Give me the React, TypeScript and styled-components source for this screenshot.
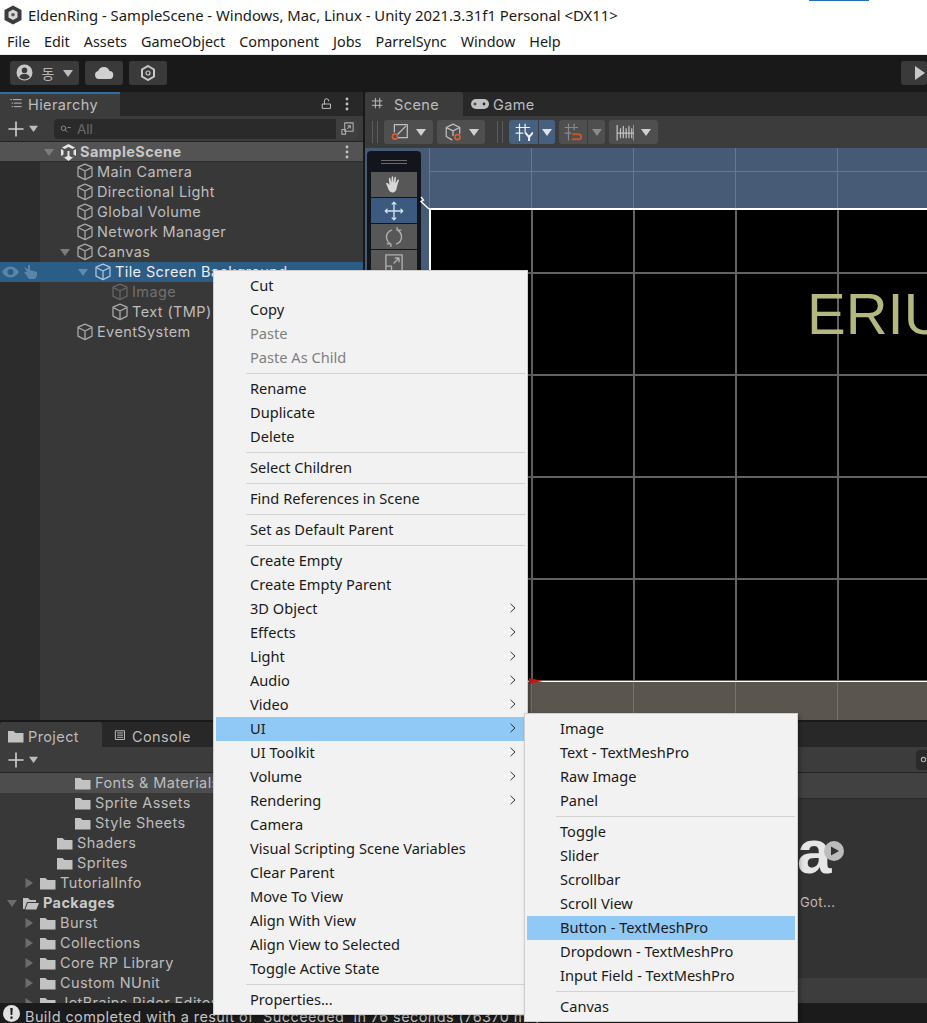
import { ReactNode } from 'react';
import styled, { createGlobalStyle } from 'styled-components';

const GlobalStyle = createGlobalStyle`
  html, body {
    margin: 0;
    padding: 0;
    background: #191919;
    overflow: hidden;
  }
  * {
    box-sizing: border-box;
  }
`;

const WIN_FONT = `"Noto Sans", "Noto Sans CJK KR", sans-serif`;
const UNITY_FONT = `Inter, "Noto Sans CJK KR", sans-serif`;

const Page = styled.div`
  position: relative;
  width: 927px;
  height: 1023px;
  overflow: hidden;
  display: flex;
  flex-direction: column;
  font-family: ${UNITY_FONT};
  background: #191919;
`;

const TitleBar = styled.div`
  position: relative;
  height: 30px;
  background: #fff;
  display: flex;
  align-items: center;
  gap: 6px;
  padding: 0 0 1px 4px;
  font-family: ${WIN_FONT};
  font-size: 14.85px;
  color: #1a1a1a;
  white-space: nowrap;
`;

const TitleAccent = styled.div`
  position: absolute;
  top: 0;
  left: 809px;
  width: 60px;
  height: 1px;
  background: #1f6fb5;
`;

const MenuBar = styled.div`
  height: 24px;
  background: #fff;
  display: flex;
  align-items: center;
  gap: 14px;
  padding: 0 0 2px 7px;
  font-family: ${WIN_FONT};
  font-size: 14.4px;
  color: #1a1a1a;
`;

const TopToolbar = styled.div`
  height: 38px;
  background: #191919;
  border-top: 1px solid #e8e8e8;
  display: flex;
  align-items: center;
  gap: 6px;
  padding: 0 0 2px 10px;
`;

const TopButton = styled.div<{ $w: number }>`
  width: ${({ $w }) => $w}px;
  height: 24px;
  background: #3a3a3a;
  border-radius: 3px;
  display: flex;
  align-items: center;
  justify-content: center;
  gap: 9px;
  color: #b4b4b4;
  font-size: 14px;
`;

const PlayButton = styled(TopButton)`
  margin-left: auto;
  justify-content: flex-start;
  padding-left: 14px;
`;

const Main = styled.div`
  height: 628px;
  display: flex;
  gap: 2px;
`;

const HierarchyPanel = styled.div`
  width: 363px;
  display: flex;
  flex-direction: column;
  background: #383838;
`;

const TabRow = styled.div`
  height: 24px;
  flex: none;
  background: #282828;
  display: flex;
  align-items: stretch;
`;

const Tab = styled.div<{ $w: number; $pad: number; $gap: number; $active?: boolean; $accent?: boolean }>`
  width: ${({ $w }) => $w}px;
  display: flex;
  align-items: center;
  gap: ${({ $gap }) => $gap}px;
  padding: 0 0 ${({ $accent }) => ($accent ? 2 : 0)}px ${({ $pad }) => $pad}px;
  font-size: 14.5px;
  letter-spacing: 0.4px;
  color: #bdbdbd;
  background: ${({ $active }) => ($active ? '#3c3c3c' : 'transparent')};
  border-top: ${({ $accent }) => ($accent ? '2px solid #2f6ea5' : 'none')};
  border-radius: ${({ $accent }) => ($accent ? '0' : '3px 3px 0 0')};
`;

const BottomTab = styled(Tab)`
  padding-top: 3px;
`;

const TabActions = styled.div`
  margin-left: auto;
  display: flex;
  align-items: center;
  gap: 11px;
  padding-right: 14px;
`;

const PanelToolbar = styled.div`
  height: 26px;
  flex: none;
  background: #3c3c3c;
  border-bottom: 1px solid #232323;
  display: flex;
  align-items: center;
  padding-left: 8px;
`;

const CaretGap = styled.span`
  margin-left: 5px;
  display: flex;
`;

const SearchField = styled.div`
  margin-left: 16px;
  width: 304px;
  height: 20px;
  background: #2a2a2a;
  border-radius: 4px;
  display: flex;
  align-items: center;
  gap: 6px;
  padding-left: 5px;
  font-size: 13.5px;
  color: #6a6a6a;
`;

const SearchAction = styled.div`
  margin-left: auto;
  width: 22px;
  height: 20px;
  background: #3f3f3f;
  border-radius: 0 4px 4px 0;
  display: flex;
  align-items: center;
  justify-content: center;
`;

const HierarchyTree = styled.div`
  flex: 1;
  background: linear-gradient(to right, #2c2c2c 40px, #383838 40px);
`;

const SceneHeaderRow = styled.div`
  height: 20px;
  background: #535353;
  border-bottom: 1px solid #2c2c2c;
  display: flex;
  align-items: center;
  padding: 1px 0 0 44px;
`;

const TreeRow = styled.div<{ $indent: number; $selected?: boolean; $highlight?: boolean }>`
  position: relative;
  height: 20px;
  display: flex;
  align-items: center;
  padding-left: ${({ $indent }) => $indent}px;
  background: ${({ $selected, $highlight }) => ($selected ? '#2c5d87' : $highlight ? '#4d4d4d' : 'transparent')};
  white-space: nowrap;
`;

const ArrowSlot = styled.span`
  width: 16px;
  flex: none;
  display: flex;
  align-items: center;
`;

const RowLabel = styled.span<{ $muted?: boolean; $selected?: boolean; $bold?: boolean }>`
  margin-left: 3px;
  padding-bottom: 2px;
  font-size: 14.5px;
  letter-spacing: 0.4px;
  font-weight: ${({ $bold }) => ($bold ? 700 : 400)};
  color: ${({ $muted, $selected, $bold }) =>
    $muted ? '#707070' : $selected ? '#ececec' : $bold ? '#c8c8c8' : '#bdbdbd'};
`;

const RowBadges = styled.div`
  position: absolute;
  left: 2px;
  top: 2px;
  display: flex;
  gap: 4px;
`;

const ScenePanel = styled.div`
  flex: 1;
  display: flex;
  flex-direction: column;
  min-width: 0;
`;

const SceneToolbar = styled.div`
  height: 32px;
  flex: none;
  background: #3c3c3c;
  display: flex;
  align-items: center;
  gap: 4px;
  padding-left: 7px;
`;

const Grip = styled.div<{ $before: number; $after: number }>`
  width: 6px;
  height: 22px;
  margin: 0 ${({ $after }) => $after}px 0 ${({ $before }) => $before}px;
  border-left: 1px solid #5c5c5c;
  border-right: 1px solid #5c5c5c;
`;

const ToolGroup = styled.div<{ $w: number; $blue?: boolean; $join?: boolean }>`
  width: ${({ $w }) => $w}px;
  height: 24px;
  background: ${({ $blue }) => ($blue ? '#46607f' : '#4f4f4f')};
  border-radius: ${({ $join }) => ($join ? '0 3px 3px 0' : '3px')};
  display: flex;
  align-items: center;
  justify-content: space-around;
  padding: 0 3px;
`;

const JoinedGroup = styled.div`
  display: flex;
  gap: 1px;
`;

const LeftTool = styled(ToolGroup)`
  border-radius: 3px 0 0 3px;
`;

const SceneView = styled.div`
  position: relative;
  flex: 1;
  display: flex;
  flex-direction: column;
  overflow: hidden;
  background: linear-gradient(#465a75, #4f6380);
`;

const Sky = styled.div`
  height: 60px;
  flex: none;
  margin-left: 64px;
  background-image: linear-gradient(to right, #66778f 1px, transparent 1px),
    linear-gradient(to bottom, #66778f 1px, transparent 1px);
  background-size: 102px 102px;
  background-position: 0 23px;
`;

const GameCanvas = styled.div`
  position: relative;
  flex: 1;
  margin-left: 64px;
  border-top: 2px solid #fff;
  border-left: 2px solid #fff;
  background-color: #000;
  background-image: linear-gradient(to right, #626262 2px, transparent 2px),
    linear-gradient(to bottom, #626262 2px, transparent 2px);
  background-size: 102px 102px;
  background-position: 100px 62px;
`;

const CanvasTitle = styled.div`
  position: absolute;
  left: 376px;
  top: 71px;
  font-family: 'Liberation Sans', sans-serif;
  font-size: 58px;
  line-height: 66px;
  color: #b5b87e;
  white-space: nowrap;
`;

const Ground = styled.div`
  height: 39px;
  flex: none;
  border-top: 1px solid #fff;
  background-color: #5a564f;
  background-image: linear-gradient(to right, #77736c 1px, transparent 1px);
  background-size: 102px 100%;
  background-position: 268px 0;
`;

const ToolPanel = styled.div`
  position: absolute;
  left: 2px;
  top: 3px;
  width: 54px;
  padding: 8px 4px 0;
  height: 160px;
  background: #12151c;
  border-radius: 4px;
  display: flex;
  flex-direction: column;
  gap: 1px;
`;

const ToolGrip = styled.div`
  height: 4px;
  margin: 1px 10px 7px;
  border-top: 1px solid #6a6a6a;
  border-bottom: 1px solid #6a6a6a;
`;

const ToolButton = styled.div<{ $active?: boolean }>`
  height: 25px;
  flex: none;
  background: ${({ $active }) => ($active ? '#3c5a80' : '#575757')};
  display: flex;
  align-items: center;
  justify-content: center;
  &:first-of-type {
    border-radius: 3px 3px 0 0;
  }
`;

const CornerGizmo = styled.svg`
  position: absolute;
  left: 55px;
  top: 48px;
`;

const RedHandle = styled.svg`
  position: absolute;
  left: 164px;
  bottom: 36px;
`;

const BottomPanel = styled.div`
  flex: 1;
  margin-top: 2px;
  display: flex;
  flex-direction: column;
  min-height: 0;
`;

const BottomTabs = styled(TabRow)`
  height: 25px;
`;

const BottomToolbar = styled(PanelToolbar)`
  height: 26px;
  padding-right: 0;
`;

const MiniSearch = styled.div`
  margin-left: auto;
  width: 11px;
  height: 20px;
  background: #2a2a2a;
  border-radius: 4px 0 0 4px;
  display: flex;
  align-items: center;
  padding-left: 4px;
`;

const BottomBody = styled.div`
  flex: 1;
  min-height: 0;
  display: flex;
`;

const ProjectTree = styled.div`
  width: 400px;
  background: #383838;
  overflow: hidden;
`;

const FolderGap = styled.span`
  width: 1px;
  flex: none;
`;

const AssetPane = styled.div`
  flex: 1;
  display: flex;
  flex-direction: column;
  background: #333;
  position: relative;
`;

const AssetHeader = styled.div`
  height: 26px;
  flex: none;
  background: #414141;
  border-bottom: 1px solid #2a2a2a;
`;

const AssetGrid = styled.div`
  flex: 1;
  position: relative;
`;

const AssetFooter = styled.div`
  height: 25px;
  flex: none;
  background: #3d3d3d;
`;

const AssetGlyph = styled.div`
  position: absolute;
  left: 397px;
  top: 18px;
  font-family: 'Liberation Sans', sans-serif;
  font-weight: 700;
  font-size: 62px;
  line-height: 70px;
  color: #e6e6e6;
`;

const AssetPlay = styled.svg`
  position: absolute;
  left: 424px;
  top: 42px;
`;

const AssetLabel = styled.div`
  position: absolute;
  left: 400px;
  top: 95px;
  font-size: 13px;
  letter-spacing: 0.4px;
  color: #bdbdbd;
`;

const StatusBar = styled.div`
  height: 20px;
  flex: none;
  background: #1b1b1b;
  display: flex;
  align-items: center;
  gap: 5px;
  padding: 6px 0 0 3px;
  font-size: 14.5px;
  letter-spacing: 0.4px;
  color: #c4c4c4;
  white-space: nowrap;
  overflow: hidden;
`;

const StatusIcon = styled.svg`
  flex: none;
  margin-top: -6px;
`;

const Menu = styled.div<{ $left: number; $top: number; $w: number }>`
  position: absolute;
  left: ${({ $left }) => $left}px;
  top: ${({ $top }) => $top}px;
  width: ${({ $w }) => $w}px;
  padding: 3px 2px 2px;
  background: #f2f2f2;
  border: 1px solid #cfcfcf;
  box-shadow: 2px 2px 4px rgba(0, 0, 0, 0.3);
  font-family: ${WIN_FONT};
  font-size: 14.6px;
  color: #1a1a1a;
`;

const MenuItem = styled.div<{ $active?: boolean; $disabled?: boolean; $pad: number }>`
  height: 24px;
  display: flex;
  align-items: center;
  justify-content: space-between;
  padding: 0 8px 3px ${({ $pad }) => $pad}px;
  white-space: nowrap;
  background: ${({ $active }) => ($active ? '#90c8f6' : 'transparent')};
  color: ${({ $disabled }) => ($disabled ? '#7f7f7f' : '#1a1a1a')};
`;

const MenuSeparator = styled.div<{ $inset: number }>`
  height: 1px;
  margin: 3px 0 3px ${({ $inset }) => $inset}px;
  background: #d2d2d2;
`;

const Stroke = ({ size = 16, color = '#bdbdbd', children }: { size?: number; color?: string; children: ReactNode }) => (
  <svg width={size} height={size} viewBox="0 0 16 16" fill="none" stroke={color} strokeWidth="1.1" strokeLinejoin="round" strokeLinecap="round">
    {children}
  </svg>
);

const Caret = ({ color = '#bdbdbd', dir = 'down', size = 10 }: { color?: string; dir?: 'down' | 'right'; size?: number }) => (
  <svg width={size} height={size} viewBox="0 0 10 10">
    <path d={dir === 'down' ? 'M0 2h10L5 9z' : 'M1.5 0v10L9 5z'} fill={color} />
  </svg>
);

const Cube = ({ color = '#a8a8a8' }: { color?: string }) => (
  <svg width="18" height="18" viewBox="0 0 18 18" fill="none" stroke={color} strokeWidth="1.3" strokeLinejoin="round">
    <path d="M9 1.2 16 4.2v9L9 16.6 2 13.2v-9z" />
    <path d="M2.4 4.6 9 8l6.6-3.4M9 8v8.4" />
  </svg>
);

const Folder = ({ open }: { open?: boolean }) => (
  <svg width="16" height="13" viewBox="0 0 16 13" fill="#c2c2c2">
    {open ? <path d="M0 1h5l2 2h6v2H4L1.6 12H0zM4.8 6H16l-2.6 6.6H2.4z" /> : <path d="M0 1h5.5l2 2H15.500v9.500H0z" />}
  </svg>
);

const SmallPlus = () => (
  <Stroke size={16} color="#d0d0d0">
    <path d="M8 1v14M1 8h14" strokeWidth="1.6" />
  </Stroke>
);

const Chevron = () => (
  <svg width="8" height="10" viewBox="0 0 8 10" fill="none" stroke="#333" strokeWidth="1">
    <path d="M1.500 .8 6 5 1.500 9.200" />
  </svg>
);

const Kebab = () => (
  <svg width="4" height="14" viewBox="0 0 4 14" fill="#c4c4c4">
    <circle cx="2" cy="2" r="1.4" />
    <circle cx="2" cy="7" r="1.4" />
    <circle cx="2" cy="12" r="1.4" />
  </svg>
);

type HierarchyItem = { label: string; indent: number; arrow?: boolean; muted?: boolean; selected?: boolean };

const hierarchyItems: HierarchyItem[] = [
  { label: 'Main Camera', indent: 60 },
  { label: 'Directional Light', indent: 60 },
  { label: 'Global Volume', indent: 60 },
  { label: 'Network Manager', indent: 60 },
  { label: 'Canvas', indent: 60, arrow: true },
  { label: 'Tile Screen Background', indent: 78, arrow: true, selected: true },
  { label: 'Image', indent: 95, muted: true },
  { label: 'Text (TMP)', indent: 95 },
  { label: 'EventSystem', indent: 60 },
];

type ProjectItem = { label: string; indent: number; arrow?: 'right' | 'down'; bold?: boolean; highlight?: boolean };

const projectItems: ProjectItem[] = [
  { label: 'Fonts & Materials', indent: 59, highlight: true },
  { label: 'Sprite Assets', indent: 59 },
  { label: 'Style Sheets', indent: 59 },
  { label: 'Shaders', indent: 41 },
  { label: 'Sprites', indent: 41 },
  { label: 'TutorialInfo', indent: 24, arrow: 'right' },
  { label: 'Packages', indent: 7, arrow: 'down', bold: true },
  { label: 'Burst', indent: 24, arrow: 'right' },
  { label: 'Collections', indent: 24, arrow: 'right' },
  { label: 'Core RP Library', indent: 24, arrow: 'right' },
  { label: 'Custom NUnit', indent: 24, arrow: 'right' },
  { label: 'JetBrains Rider Editor', indent: 24, arrow: 'right' },
];

type MenuEntry = { label?: string; disabled?: boolean; sub?: boolean; active?: boolean; sep?: boolean };

const contextMenu: MenuEntry[] = [
  { label: 'Cut' },
  { label: 'Copy' },
  { label: 'Paste', disabled: true },
  { label: 'Paste As Child', disabled: true },
  { sep: true },
  { label: 'Rename' },
  { label: 'Duplicate' },
  { label: 'Delete' },
  { sep: true },
  { label: 'Select Children' },
  { sep: true },
  { label: 'Find References in Scene' },
  { sep: true },
  { label: 'Set as Default Parent' },
  { sep: true },
  { label: 'Create Empty' },
  { label: 'Create Empty Parent' },
  { label: '3D Object', sub: true },
  { label: 'Effects', sub: true },
  { label: 'Light', sub: true },
  { label: 'Audio', sub: true },
  { label: 'Video', sub: true },
  { label: 'UI', sub: true, active: true },
  { label: 'UI Toolkit', sub: true },
  { label: 'Volume', sub: true },
  { label: 'Rendering', sub: true },
  { label: 'Camera' },
  { label: 'Visual Scripting Scene Variables' },
  { label: 'Clear Parent' },
  { label: 'Move To View' },
  { label: 'Align With View' },
  { label: 'Align View to Selected' },
  { label: 'Toggle Active State' },
  { sep: true },
  { label: 'Properties...' },
];

const uiMenu: MenuEntry[] = [
  { label: 'Image' },
  { label: 'Text - TextMeshPro' },
  { label: 'Raw Image' },
  { label: 'Panel' },
  { sep: true },
  { label: 'Toggle' },
  { label: 'Slider' },
  { label: 'Scrollbar' },
  { label: 'Scroll View' },
  { label: 'Button - TextMeshPro', active: true },
  { label: 'Dropdown - TextMeshPro' },
  { label: 'Input Field - TextMeshPro' },
  { sep: true },
  { label: 'Canvas' },
];

const menus = ['File', 'Edit', 'Assets', 'GameObject', 'Component', 'Jobs', 'ParrelSync', 'Window', 'Help'];

const renderMenu = (entries: MenuEntry[], pad: number, inset: number) =>
  entries.map((entry, i) =>
    entry.sep ? (
      <MenuSeparator key={i} $inset={inset} />
    ) : (
      <MenuItem key={i} $pad={pad} $active={entry.active} $disabled={entry.disabled}>
        {entry.label}
        {entry.sub && <Chevron />}
      </MenuItem>
    ),
  );

const App = () => {
  return (
    <Page>
      <GlobalStyle />
      <TitleBar>
        <svg width="18" height="20" viewBox="0 0 18 20">
          <path d="M9 0.500 17.500 5v10L9 19.500 0.500 15V5z" fill="#3c3c3c" />
          <path d="M9 4.500 13.500 7v5.500L9 15l-4.500-2.500V7z" fill="#d8d8d8" />
          <circle cx="9" cy="9.800" r="1.800" fill="#555" />
        </svg>
        EldenRing - SampleScene - Windows, Mac, Linux - Unity 2021.3.31f1 Personal &lt;DX11&gt;
        <TitleAccent />
      </TitleBar>
      <MenuBar>
        {menus.map((menu) => (
          <span key={menu}>{menu}</span>
        ))}
      </MenuBar>
      <TopToolbar>
        <TopButton $w={69}>
          <svg width="17" height="17" viewBox="0 0 16 16">
            <circle cx="8" cy="8" r="7.500" fill="#c8c8c8" />
            <circle cx="8" cy="6" r="2.600" fill="#3a3a3a" />
            <path d="M3 12.500c1-2.500 3-3 5-3s4 .5 5 3c-1.200 1.200-3 2-5 2s-3.800-.8-5-2z" fill="#3a3a3a" />
          </svg>
          동
          <Caret />
        </TopButton>
        <TopButton $w={38}>
          <svg width="20" height="13" viewBox="0 0 20 13">
            <path d="M5 13a4 4 0 0 1-.8-7.900A6 6 0 0 1 15.500 5a4 4 0 0 1-.5 8z" fill="#d0d0d0" />
          </svg>
        </TopButton>
        <TopButton $w={38}>
          <svg width="16" height="16" viewBox="0 0 16 16" fill="none" stroke="#c8c8c8">
            <path d="M8 1 14 4.500v7L8 15 2 11.500v-7z" strokeWidth="2" />
            <circle cx="8" cy="8" r="2" strokeWidth="1.200" />
          </svg>
        </TopButton>
        <PlayButton $w={26}>
          <svg width="10" height="14" viewBox="0 0 10 14">
            <path d="M0 0 10 7 0 14z" fill="#c8c8c8" />
          </svg>
        </PlayButton>
      </TopToolbar>

      <Main>
        <HierarchyPanel>
          <TabRow>
            <Tab $w={120} $pad={9} $gap={5} $active $accent>
              <Stroke size={14}>
                <path d="M2 3h1M5 3h9M3.500 7H4M6 7h8M3.500 11H4M6 11h8" />
              </Stroke>
              Hierarchy
            </Tab>
            <TabActions>
              <Stroke size={14} color="#c4c4c4">
                <path d="M3 8h9v5H3zM5 8V4.500a2.500 2.500 0 0 1 5 0" />
              </Stroke>
              <Kebab />
            </TabActions>
          </TabRow>
          <PanelToolbar>
            <SmallPlus />
            <CaretGap>
              <Caret size={9} />
            </CaretGap>
            <SearchField>
              <Stroke size={12} color="#9a9a9a">
                <circle cx="6" cy="7" r="3" />
                <path d="M8.500 9.500 11 12M12 6h3" />
              </Stroke>
              All
              <SearchAction>
                <Stroke size={15} color="#b0b0b0">
                  <path d="M5 2h9v9H5zM2 9h4v5H2zM8 8l3-3M8.500 5H11v2.500" />
                </Stroke>
              </SearchAction>
            </SearchField>
          </PanelToolbar>
          <HierarchyTree>
            <SceneHeaderRow>
              <ArrowSlot>
                <Caret color="#7c7c7c" />
              </ArrowSlot>
              <svg width="17" height="17" viewBox="0 0 17 17" fill="#e4e4e4">
                <path d="M8.500 0 15 3.500 12.500 5 8.500 3 4.500 5 2 3.500z" />
                <path d="M1 5l2.500 1.500v4L1 12zM16 5l-2.500 1.500v4L16 12z" />
                <path d="M7.500 7h2v5l3 1.500L15 12l-6.500 5L2 12l2.500 1.500 3-1.500z" />
              </svg>
              <RowLabel $bold>SampleScene</RowLabel>
              <TabActions>
                <Kebab />
              </TabActions>
            </SceneHeaderRow>
            {hierarchyItems.map((item) => (
              <TreeRow key={item.label} $indent={item.indent} $selected={item.selected}>
                {item.selected && (
                  <RowBadges>
                    <svg width="17" height="16" viewBox="0 0 17 16">
                      <path d="M0 8c2.500-4 5.500-5.500 8.500-5.500S14.500 4 17 8c-2.500 4-5.500 5.500-8.500 5.500S2.500 12 0 8z" fill="#5a84a8" />
                      <circle cx="8.500" cy="8" r="3" fill="#2c5d87" />
                    </svg>
                    <svg width="15" height="16" viewBox="0 0 15 16">
                      <path d="M1 3l4 2V1h2v5l7 2v4l-2 3H6L1 8h3z" fill="#5a84a8" />
                    </svg>
                  </RowBadges>
                )}
                <ArrowSlot>{item.arrow && <Caret color={item.selected ? '#5f89ad' : '#7c7c7c'} />}</ArrowSlot>
                <Cube color={item.muted ? '#666' : item.selected ? '#a9c4dc' : '#a8a8a8'} />
                <RowLabel $muted={item.muted} $selected={item.selected}>
                  {item.label}
                </RowLabel>
              </TreeRow>
            ))}
          </HierarchyTree>
        </HierarchyPanel>

        <ScenePanel>
          <TabRow>
            <Tab $w={98} $pad={6} $gap={9} $active>
              <Stroke size={14}>
                <path d="M5 1.500v11M10 1.500v11M1.500 4.500h11M1.500 9.500h11" />
              </Stroke>
              Scene
            </Tab>
            <Tab $w={110} $pad={8} $gap={4}>
              <svg width="18" height="12" viewBox="0 0 18 12">
                <rect x="0" y="1" width="18" height="10" rx="5" fill="#c0c0c0" />
                <path d="M4 4.500v3M2.500 6h3" stroke="#282828" strokeWidth="1" />
                <circle cx="13" cy="6" r="1.400" fill="#282828" />
              </svg>
              Game
            </Tab>
          </TabRow>
          <SceneToolbar>
            <Grip $before={0} $after={2} />
            <ToolGroup $w={49}>
              <Stroke size={18} color="#c0c0c0">
                <path d="M3 1.500h11.500V13H6M3 8V1.500M6 10l7-7" />
                <circle cx="3.500" cy="12" r="2.300" stroke="#d0653a" strokeWidth="1.400" />
              </Stroke>
              <Caret color="#d0d0d0" />
            </ToolGroup>
            <ToolGroup $w={48}>
              <Stroke size={18} color="#c0c0c0">
                <path d="M8 1 14 4v5M2 4l6-3M2 4v8l5 3M2 4l6 3 6-3M8 7v4" />
                <circle cx="12" cy="12.500" r="2.300" stroke="#d0653a" strokeWidth="1.400" />
              </Stroke>
              <Caret color="#d0d0d0" />
            </ToolGroup>
            <Grip $before={8} $after={2} />
            <JoinedGroup>
              <LeftTool $w={29} $blue>
                <Stroke size={18} color="#f0f0f0">
                  <path d="M4 1v12M9 1v7M1 4h12M1 9h6M4 13v3" />
                  <path d="M9.500 9l3 3.500 3-3.500M12.500 12.500V17" strokeWidth="1.800" />
                </Stroke>
              </LeftTool>
              <ToolGroup $w={16} $blue $join>
                <Caret color="#e0e0e0" />
              </ToolGroup>
            </JoinedGroup>
            <JoinedGroup>
              <LeftTool $w={28}>
                <Stroke size={18} color="#8c8c8c">
                  <path d="M4 1v14M9 1v6M1 4h12M1 9h6" strokeDasharray="2 1" />
                  <path d="M8 10h5a2.200 2.200 0 0 1 0 4.500H8" stroke="#c4552f" strokeWidth="1.800" />
                </Stroke>
              </LeftTool>
              <ToolGroup $w={17} $join>
                <Caret color="#8a8a8a" />
              </ToolGroup>
            </JoinedGroup>
            <ToolGroup $w={49}>
              <Stroke size={18} color="#c0c0c0">
                <path d="M1 2v13M16 2v13M1 9h15M4 5v8M6.500 3v10M9 5v8M11.500 3v10M14 5v8" />
              </Stroke>
              <Caret color="#d0d0d0" />
            </ToolGroup>
          </SceneToolbar>
          <SceneView>
            <Sky />
            <GameCanvas>
              <CanvasTitle>ERIU</CanvasTitle>
            </GameCanvas>
            <Ground />
            <ToolPanel>
              <ToolGrip />
              <ToolButton>
                <svg width="20" height="20" viewBox="0 0 20 20">
                  <path d="M3 10.500 2 8.500c.6-.7 1.500-.5 2 0L5.500 10 4.800 3.500c0-1 1.300-1.200 1.500 0L7.300 8 7.700 2c0-1 1.500-1 1.500 0l.3 6 1-5.500c.2-1 1.500-.8 1.500.2L11.500 8.500 13.500 5c.5-.9 1.700-.4 1.400.5l-2 6.500c-.4 3-1.500 5.500-4.400 5.500-3 0-4-3-5.500-7z" fill="#d8d8d8" />
                </svg>
              </ToolButton>
              <ToolButton $active>
                <Stroke size={20} color="#cfe0f0">
                  <path d="M8 1v14M1 8h14M6.500 2.500 8 1l1.500 1.500M6.500 13.500 8 15l1.500-1.500M2.500 6.500 1 8l1.500 1.500M13.500 6.500 15 8l-1.500 1.500" />
                </Stroke>
              </ToolButton>
              <ToolButton>
                <Stroke size={20} color="#b0b0b0">
                  <path d="M6 2.500C3.500 3.500 2 5.500 2 8c0 2.500 1 4 3 5.500M10 13.500c2.500-1 4-3 4-5.500 0-2.500-1-4-3-5.500M2.500 13.500H5.500v2M13.500 2.500H10.500v-2" />
                </Stroke>
              </ToolButton>
              <ToolButton>
                <Stroke size={20} color="#b0b0b0">
                  <path d="M1.500 10V1.500h13v13H6M1.500 10.500H6v4.500H1.500zM8 8l4-4M9 4h3v3" />
                </Stroke>
              </ToolButton>
            </ToolPanel>
            <CornerGizmo width="10" height="14" viewBox="0 0 10 14" fill="none" stroke="#fff" strokeWidth="1.300">
              <path d="M1 1 3.500 4 1 5.500 9 13" />
            </CornerGizmo>
            <RedHandle width="14" height="6" viewBox="0 0 14 6">
              <path d="M0 0 14 3 0 6z" fill="#c81a12" />
            </RedHandle>
          </SceneView>
        </ScenePanel>
      </Main>

      <BottomPanel>
        <BottomTabs>
          <BottomTab $w={102} $pad={8} $gap={4} $active>
            <Folder />
            Project
          </BottomTab>
          <BottomTab $w={110} $pad={12} $gap={4}>
            <Stroke size={14}>
              <path d="M2 2h10v10H2zM4 4.500h6M4 7h6M4 9.500h6" />
            </Stroke>
            Console
          </BottomTab>
        </BottomTabs>
        <BottomToolbar>
          <SmallPlus />
          <CaretGap>
            <Caret size={9} />
          </CaretGap>
          <MiniSearch>
            <Stroke size={10} color="#b0b0b0">
              <circle cx="8" cy="7" r="5" strokeWidth="2.500" />
            </Stroke>
          </MiniSearch>
        </BottomToolbar>
        <BottomBody>
          <ProjectTree>
            {projectItems.map((item) => (
              <TreeRow key={item.label} $indent={item.indent} $highlight={item.highlight}>
                <ArrowSlot>{item.arrow && <Caret dir={item.arrow} color="#6c6c6c" />}</ArrowSlot>
                <Folder open={item.arrow === 'down'} />
                <FolderGap />
                <RowLabel $bold={item.bold}>{item.label}</RowLabel>
              </TreeRow>
            ))}
          </ProjectTree>
          <AssetPane>
            <AssetHeader />
            <AssetGrid>
              <AssetGlyph>a</AssetGlyph>
              <AssetPlay width="20" height="20" viewBox="0 0 20 20">
                <circle cx="10" cy="10" r="10" fill="#bcbcbc" />
                <path d="M7 5.500 15 10 7 14.500z" fill="#333" />
              </AssetPlay>
              <AssetLabel>Got...</AssetLabel>
            </AssetGrid>
            <AssetFooter />
          </AssetPane>
        </BottomBody>
        <StatusBar>
          <StatusIcon width="17" height="17" viewBox="0 0 17 17">
            <circle cx="8.500" cy="8.500" r="8.500" fill="#e0e0e0" />
            <path d="M7.300 3h2.400l-.4 7H7.700zM7.400 11.500h2.200v2.200H7.400z" fill="#1b1b1b" />
          </StatusIcon>
          Build completed with a result of 'Succeeded' in 76 seconds (76370 ms)
        </StatusBar>
      </BottomPanel>

      <Menu $left={213} $top={270} $w={315}>
        {renderMenu(contextMenu, 34, 30)}
      </Menu>
      <Menu $left={524} $top={713} $w={274}>
        {renderMenu(uiMenu, 33, 29)}
      </Menu>
    </Page>
  );
};

export default App;
